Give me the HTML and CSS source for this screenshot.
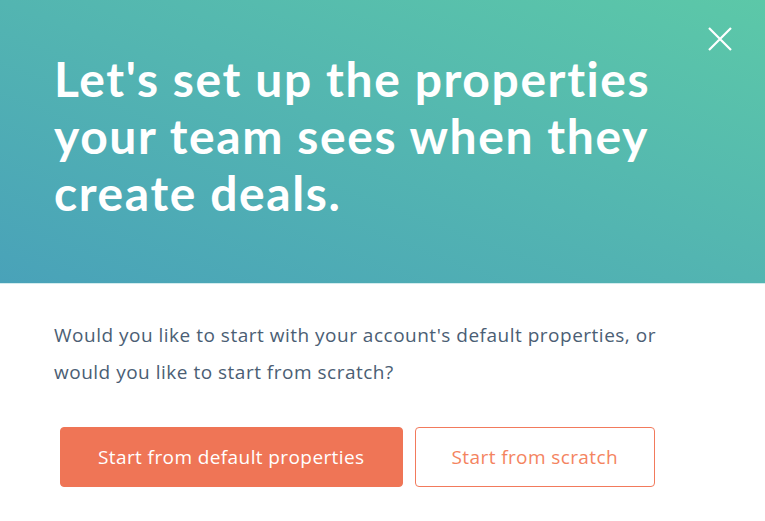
FILE: index.html
```html
<!DOCTYPE html>
<html lang="en">
<head>
<meta charset="utf-8">
<title>Set up deal properties</title>
<link rel="stylesheet" href="styles.css">
</head>
<body>
<div class="modal">
  <header class="hero">
    <h1 class="hero-title">Let's set up the properties your team sees when they create deals.</h1>
    <button class="close" aria-label="Close">
      <svg width="24" height="24" viewBox="0 0 24 24"><path d="M1 1L23 23M23 1L1 23" stroke="#fff" stroke-width="2.2" fill="none"/></svg>
    </button>
  </header>
  <section class="body">
    <p class="lead">Would you like to start with your account's default properties, or would you like to start from scratch?</p>
    <div class="actions">
      <button class="btn btn-primary">Start from default properties</button>
      <button class="btn btn-secondary">Start from scratch</button>
    </div>
  </section>
</div>
</body>
</html>
```
FILE: styles.css
```css
html, body {
  margin: 0;
  padding: 0;
  background: #fff;
}
.modal {
  width: 765px;
  height: 521px;
  font-family: "Open Sans", Lato, sans-serif;
}
.hero {
  position: relative;
  height: 284px;
  box-sizing: border-box;
  padding: 50px 60px 0 54px;
  background: linear-gradient(to top right, #49a2b9 0%, #53b5b1 50%, #5cc8a8 100%);
  border-bottom: 1px solid #d2ecee;
}
.hero-title {
  margin: 0;
  color: #fff;
  font-family: Lato, "Open Sans", sans-serif;
  font-size: 48px;
  line-height: 57px;
  font-weight: 700;
  letter-spacing: 1.6px;
  max-width: 640px;
}
.close {
  position: absolute;
  top: 27px;
  left: 708px;
  width: 24px;
  height: 24px;
  padding: 0;
  border: 0;
  background: none;
  display: flex;
}
.body {
  padding: 33px 54px 0 54px;
}
.lead {
  margin: 0;
  font-size: 19px;
  line-height: 37px;
  letter-spacing: 0.5px;
  color: #4b5e74;
  max-width: 615px;
}
.actions {
  display: flex;
  gap: 12px;
  margin-top: 36px;
  padding-left: 6px;
}
.btn {
  height: 60px;
  box-sizing: border-box;
  padding: 0 36px;
  border-radius: 4px;
  font-family: "Open Sans", Lato, sans-serif;
  font-size: 19px;
  letter-spacing: 0.4px;
  cursor: pointer;
}
.btn-primary {
  padding: 0 37px;
  background: #ef7556;
  border: 1px solid #ef7556;
  color: #fff;
}
.btn-secondary {
  background: #fff;
  border: 1px solid #f27a5c;
  color: #f4845f;
}
```
